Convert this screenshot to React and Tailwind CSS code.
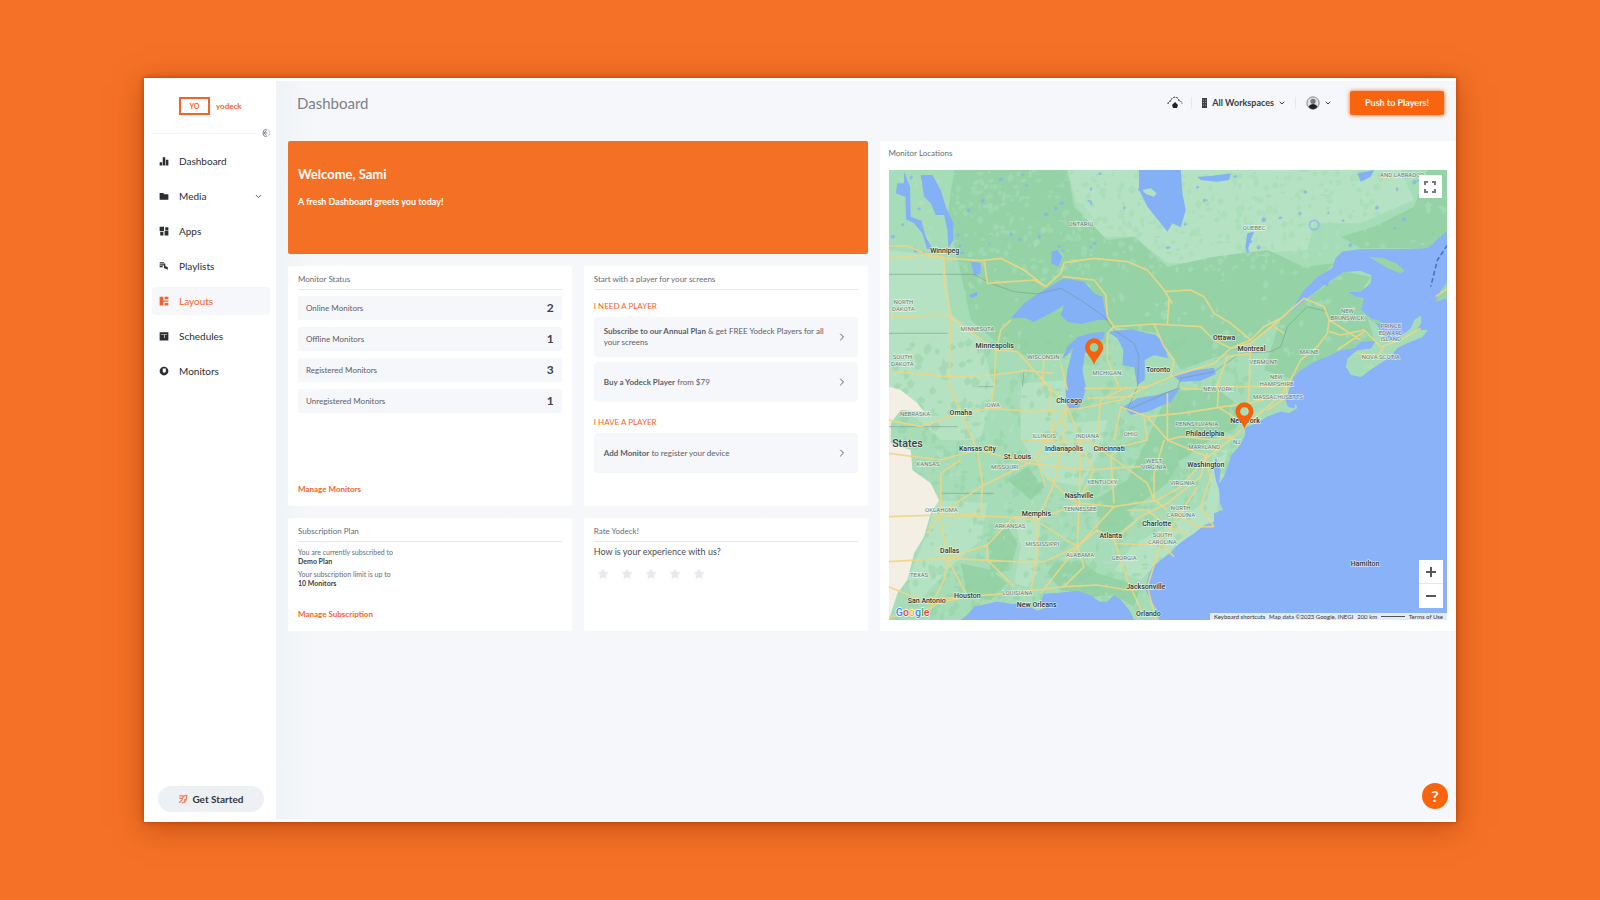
import { useState } from 'react'
import { ChevronDown, ChevronRight, Star } from 'lucide-react'

const NAV = [
  { label: 'Dashboard', icon: 'bars' },
  { label: 'Media', icon: 'folder', more: true },
  { label: 'Apps', icon: 'apps' },
  { label: 'Playlists', icon: 'playlist' },
  { label: 'Layouts', icon: 'layout', active: true },
  { label: 'Schedules', icon: 'calendar' },
  { label: 'Monitors', icon: 'monitor' },
]

const STATUS = [
  ['Online Monitors', 2],
  ['Offline Monitors', 1],
  ['Registered Monitors', 3],
  ['Unregistered Monitors', 1],
]

const ICONS = {
  bars: <path d="M1 10h4v5H1zM6 2h4v13H6zM11 6h4v9h-4z" />,
  folder: <path d="M1 3h6l1 2h7v9H1z" />,
  apps: <path d="M1 1h7v7H1zM10 2h5v5h-5zM2 9h5v6H2zM9 8h6v7H9z" />,
  playlist: <path d="M1 2h7v2H1zM1 5h7v2H1zM1 8h5v2H1zM8 4v7l6 3v-4l-4-2V4z" />,
  layout: <path d="M1 1h6v14H1zM9 1h6v4H9zM9 11h6v4H9zM7 7h8v2H7z" />,
  calendar: <path fillRule="evenodd" d="M1 2h14v13H1zM3 5h10v1H3zM8 6h1v5H8z" />,
  monitor: <path fillRule="evenodd" d="M8 1a7 7 0 1 0 0 14A7 7 0 0 0 8 1zM6 4h5v5l-3 2-2-2z" />,
}

function NavIcon({ name }) {
  return (
    <svg viewBox="0 0 16 16" className="h-[10px] w-[10px] shrink-0" fill="currentColor" aria-hidden="true">
      {ICONS[name]}
    </svg>
  )
}

function Sidebar() {
  return (
    <aside className="flex w-[132px] shrink-0 flex-col bg-white pr-[6px] pl-2">
      <a href="#home" className="mt-4 ml-[27px] flex h-[18px] items-center gap-[6px] text-[#f4622a]">
        <span className="flex h-[18px] w-[31px] items-center justify-center border-2 border-[#f4622a] text-[7px] font-bold">
          YO
        </span>
        <span className="text-[8px] font-bold">yodeck</span>
      </a>
      <div className="mt-2 flex h-5 items-center">
        <span className="h-px flex-1 bg-gray-100" />
        <button aria-label="Collapse menu" className="ml-1 text-gray-500">
          <svg viewBox="0 0 12 12" className="h-[10px] w-[10px]" fill="none" stroke="currentColor">
            <path d="M8 1.5a4.5 4.5 0 1 0 0 9M8 3 4.500 6 8 9M4.500 6H9" />
            <path d="M9 2a4.500 4.500 0 0 1 0 8" strokeDasharray="1 1" />
          </svg>
        </button>
      </div>
      <nav className="mt-1 flex flex-col gap-[7px]">
        {NAV.map((item) => (
          <a
            key={item.label}
            href={`#${item.label.toLowerCase()}`}
            className={`flex h-7 items-center gap-[10px] rounded-sm px-[7px] text-[10px] ${
              item.active ? 'bg-[#f6f7fa] text-[#f4622a]' : 'text-[#2b2e33]'
            }`}
          >
            <NavIcon name={item.icon} />
            <span className="flex-1">{item.label}</span>
            {item.more && <ChevronDown size={9} />}
          </a>
        ))}
      </nav>
      <button className="mt-auto mb-[7px] flex h-[26px] w-[106px] items-center justify-center gap-1 self-center rounded-full bg-[#edf1f4] text-[10px] font-bold text-[#33373d]">
        <svg viewBox="0 0 16 16" className="h-[10px] w-[10px]" fill="none" stroke="#f47b55" strokeWidth="2" aria-hidden="true">
          <path d="M2 3h7M2 7h5M2 14l4-4M6 14c5 0 8-4 8-12-4 0-7 3-8 8M11 8v6" />
        </svg>
        Get Started
      </button>
    </aside>
  )
}

function TopBar() {
  return (
    <header className="flex h-[44px] items-center pr-3 pl-[21px] text-[10px] text-[#3a3e44]">
      <h1 className="flex-1 text-[15px] text-[#7d8188]">Dashboard</h1>
      <button aria-label="Upload" className="px-2 text-[#222]">
        <svg viewBox="0 0 16 16" className="h-4 w-4" fill="none" stroke="currentColor" strokeWidth="1">
          <path d="M1 9c0-2 1-3 3-3 0-5 8-5 8 0 2 0 3 1 3 3" strokeDasharray="2 1" />
          <path d="M8 7l3 3-1 3H6l-1-3z" fill="currentColor" stroke="none" />
        </svg>
      </button>
      <span className="h-3 w-px bg-gray-200" />
      <button className="flex items-center gap-1 px-[9px] font-bold">
        <svg viewBox="0 0 8 12" className="h-[10px] w-[7px]" fill="currentColor" aria-hidden="true">
          <path fillRule="evenodd" d="M1 0h6v12H1zM2 2h1v1H2zM5 2h1v1H5zM2 5h1v1H2zM5 5h1v1H5zM2 8h1v1H2zM5 8h1v1H5z" />
        </svg>
        <span className="text-[9px]">All Workspaces</span>
        <ChevronDown size={8} strokeWidth={3} />
      </button>
      <span className="h-3 w-px bg-gray-200" />
      <button aria-label="Account" className="flex items-center gap-1 px-[10px]">
        <svg viewBox="0 0 16 16" className="h-[14px] w-[14px]" aria-hidden="true">
          <circle cx="8" cy="8" r="7" fill="#dfe2e6" stroke="#777" />
          <circle cx="8" cy="6" r="3" fill="#777" />
          <path d="M3 12c2-4 8-4 10 0-2 4-8 4-10 0z" fill="#222" />
        </svg>
        <ChevronDown size={8} strokeWidth={3} />
      </button>
      <button className="ml-2 h-6 w-[94px] rounded-xs bg-[#fb640f] text-[9px] font-bold text-white shadow-[0_0_4px_#fb640f]">
        Push to Players!
      </button>
    </header>
  )
}

function Card({ title, className = '', children }) {
  return (
    <section className={`flex flex-col rounded-xs bg-white px-[10px] pt-[5px] pb-[9px] ${className}`}>
      <h2 className="border-b border-[#e4e8eb] pb-[2px] text-[8px] leading-4 text-[#666b72]">{title}</h2>
      {children}
    </section>
  )
}

function PlayerLink({ children }) {
  return (
    <a href="#player" className="flex h-10 items-center gap-1 rounded-sm bg-[#f6f7fa] px-[10px] text-[8px] leading-[11px] text-[#5b6068]">
      <span className="flex-1">{children}</span>
      <ChevronRight size={12} className="shrink-0" />
    </a>
  )
}

function Rating() {
  const [rating, setRating] = useState(0)
  return (
    <div className="mt-2 ml-[3px] flex gap-3">
      {[1, 2, 3, 4, 5].map((n) => (
        <button key={n} aria-label={`${n} stars`} onClick={() => setRating(n)}>
          <Star size={12} strokeWidth={1} className={n <= rating ? 'fill-[#f4622a] text-[#f4622a]' : 'fill-[#e6eaee] text-[#e6eaee]'} />
        </button>
      ))}
    </div>
  )
}

const LAND =
  'M24 90H1701V270L1640 325 1560 328 1440 328 1385 335 1365 355 1355 385 1310 410 1270 450 1235 505 1200 535 1225 520 1280 475 1330 435 1390 395 1440 392 1472 405 1470 430 1440 455 1400 455 1425 470 1450 475 1440 510 1465 530 1490 555 1510 590 1545 600 1590 565 1600 540 1622 525 1622 550 1608 570 1642 570 1625 592 1580 610 1550 625 1530 650 1500 670 1470 690 1440 712 1410 705 1395 680 1400 655 1430 630 1470 625 1485 602 1440 605 1420 625 1380 630 1350 645 1300 665 1260 690 1240 710 1225 750 1215 780 1222 800 1240 805 1245 790 1250 805 1225 820 1200 815 1160 830 1130 850 1095 862 1092 890 1075 920 1052 945 1045 970 1030 1010 1015 1030 1020 990 1005 950 998 980 1005 1020 1015 1050 1018 1090 1028 1110 1000 1120 1000 1145 970 1155 940 1180 910 1200 890 1215 870 1240 840 1260 815 1280 800 1320 795 1350 810 1380 830 1410 835 1440H760L745 1410 720 1380 700 1365 680 1385 655 1385 630 1365 590 1352 540 1358 490 1362 480 1385 505 1400 470 1412 430 1392 390 1392 350 1385 320 1392 280 1400 260 1425 240 1440H24z'

const FOREST = [
  'M220 90H560L580 200 680 300 760 290 860 380 1000 350 1160 330 1270 380 1360 370 1200 535 1090 620 900 690 830 580 690 560 660 640 560 640 440 650 340 600 270 540 240 400 200 230z',
  'M1200 535 1390 395 1470 410 1440 460 1480 600 1300 670 1240 720 1150 690z',
  'M1640 90H1701V270L1640 325H1440L1380 290 1480 260 1600 200z',
  'M860 760 1000 740 1080 800 1070 860 990 900 900 960 860 1030 780 1090 700 1140 650 1130 640 1080 740 1020 790 920z',
  'M380 1020 440 980 490 1040 450 1080z',
  'M320 1200 380 1160 410 1210 390 1290 330 1300z',
  'M240 1270 330 1290 380 1330 330 1380 260 1370z',
  'M520 1270 600 1260 650 1300 780 1340 760 1400 700 1365 640 1370 540 1350 500 1300z',
  'M660 1130 740 1100 760 1140 700 1190 650 1170z',
]

const LIGHT = [
  'M560 90H1560L1600 180 1440 250 1300 250 1280 330 1120 340 960 370 860 370 760 290 660 290 590 200z',
  'M24 330 190 350 210 520 300 600 340 740 300 900 180 900 24 760z',
  'M420 730 560 720 560 850 680 840 660 930 600 1040 500 1020 420 900z',
  'M400 1130 480 1130 470 1300 440 1340 400 1330 420 1220z',
  'M170 1080 320 1090 300 1200 210 1280 100 1400 80 1320 130 1200z',
  'M1000 930 1040 930 1015 1080 1000 1180 880 1220 780 1320 700 1290 760 1210 880 1150 980 1080z',
]

const LAKES = [
  'M120 105H155L180 150 195 200 218 250 218 300 203 325 200 270 190 225 165 225 150 190 130 170z',
  'M70 95 88 140 90 230 122 242 135 290 156 328 138 326 125 280 100 250 76 238 74 170 45 160 50 130 70 130z',
  'M775 90H900L905 160 915 210 900 262 875 250 860 275 840 250 800 200 775 150z',
  'M390 535 430 490 490 450 550 415 610 425 640 460 665 470 675 520 688 540 650 540 600 552 560 545 540 525 550 495 510 520 460 545 430 533z',
  'M545 655 560 620 590 592 630 580 672 575 668 598 630 608 613 640 605 690 615 740 608 775 592 808 565 810 555 790 555 740 560 690 578 620 560 645z',
  'M680 575 750 568 825 585 850 610 862 655 820 645 792 660 792 720 770 735 760 682 725 675 728 630 710 595z',
  'M728 800 770 775 830 765 900 742 870 785 800 815 750 824z',
  'M875 705 930 692 1000 683 1005 702 960 722 900 725z',
  'M512 335 530 330 545 350 532 380 512 370z',
  'M270 365 300 370 300 400 280 408z',
  'M265 465 290 455 288 468 270 474z',
  'M950 110 990 108 1050 100 1045 120 1010 125 960 120z',
  'M1100 280 1120 275 1110 300 1098 340 1094 320z',
  'M1430 100 1480 90 1470 110 1440 125z',
  'M1320 425 1345 420 1340 440z',
]

const ROADS = [
  'M24 318 80 318 130 340 200 355 300 362 360 355 430 390 495 440 540 400 550 368 640 355 740 365 800 390 850 450 875 490',
  'M24 355 130 345 190 355 190 430 210 520 205 740 240 820 290 930 305 1030 300 1120 200 1130',
  'M310 362 320 430 460 420 495 440',
  'M545 410 640 420 675 465 680 530 700 560 820 552 960 560 1000 600 1050 625 1110 600',
  'M700 560 680 580 680 660 715 740',
  'M24 530 200 525 290 590 345 630 410 635 450 680 510 745 560 800',
  'M390 540 360 570 345 640 340 740 330 800',
  'M24 693 200 710 340 705 450 690',
  'M850 455 930 450 970 470 1000 520 1050 550 1110 600 1150 560 1200 535 1270 475 1330 500 1345 540 1440 600',
  'M820 552 850 620 880 660 870 710 800 740 720 780 600 805 460 815 330 805 240 820 120 860 24 840',
  'M865 470 860 552',
  'M870 710 1000 670 1050 625 1110 610 1105 740 1100 840',
  'M1110 610 1190 545 1270 475M1105 640 1040 650 1015 720 1010 800 1090 850',
  'M1345 540 1340 580 1310 620 1260 660 1240 700 1205 760 1150 810 1095 855 1060 890 970 960 900 1040 830 1080 700 1100 590 1220 480 1360',
  'M1345 575 1380 585 1450 570 1500 620 1560 600 1620 565M1450 575 1370 630M1510 620 1490 650 1430 640',
  'M560 800 500 900 460 960 300 1040 180 1120 140 1180',
  'M560 800 600 900 620 900 690 950 800 1030 820 1080',
  'M560 800 540 930 520 1030 470 1140 465 1260 450 1360',
  'M24 940 180 960 290 930 450 970 620 990 780 980',
  'M24 1130 180 1125 360 1130 460 1140 600 1090 700 1100',
  'M24 1265 200 1255 320 1215 400 1130 470 1140',
  'M200 1255 180 1130 180 1000 240 960',
  'M200 1255 260 1370 170 1390 130 1420 24 1430M200 1255 190 1320 145 1410',
  'M320 1215 320 1260 400 1340',
  'M205 1255 400 1265 490 1265 590 1220',
  'M24 1340 120 1380 260 1370 380 1360 550 1340 650 1335 740 1350 820 1345',
  'M590 1220 650 1170 700 1200 780 1130 860 1090 960 1010 980 940',
  'M590 1220 610 1280 550 1340M480 1150 590 1220 595 1090 600 900',
  'M700 1200 740 1320 790 1430M700 1210 820 1215 860 1180 950 1040',
  'M880 1250 840 1210 800 1340 825 1440',
  'M1000 1160 960 1100 990 1010 970 950',
  'M510 745 515 900 460 900 420 900M650 900 660 780 740 740',
  'M700 900 720 800 800 830 860 900 900 890 1000 900 1060 890',
  'M800 830 900 820 1030 800 1105 790 1180 770',
  'M850 900 820 1000 820 1080 860 1110M790 830 800 900 720 920 690 950',
  'M690 950 700 1090M540 930 470 960 495 1040M500 1010 560 1070 595 1090',
  'M590 900 640 990 600 1070M600 905 480 905M860 760 860 900 980 950',
  'M740 1110 800 1110 860 1160 920 1180M870 1090 900 1130 950 1160 1000 1160',
  'M1180 560 1210 580M1020 740 1210 740M1160 810 1220 770 1215 730',
  'M490 650 485 740M540 670 560 750M1665 470 1701 445',
  'M610 745 740 745 800 740M420 690 520 700M620 775 760 770M900 745 1000 750 1015 720',
]

const BORDERS = [
  'M24 403H280L330 430 400 455 470 462 540 445 600 480 670 530 700 570 760 610 775 650 770 740 740 810 890 745 900 715 1000 695 1080 640 1170 635 1200 620 1220 560 1280 500 1340 515',
  'M24 580H200M24 860H230M290 740H340M180 1060H340M430 690 425 740',
]

const STATES = [
  ['ONTARIO', 600, 258],
  ['QUEBEC', 1120, 269],
  ['NORTH', 68, 492],
  ['DAKOTA', 68, 512],
  ['MINNESOTA', 290, 574],
  ['SOUTH', 65, 658],
  ['DAKOTA', 65, 678],
  ['WISCONSIN', 488, 656],
  ['MICHIGAN', 678, 706],
  ['VERMONT', 1148, 671],
  ['NEW', 1187, 717],
  ['HAMPSHIRE', 1187, 737],
  ['MAINE', 1285, 641],
  ['NEW', 1400, 520],
  ['BRUNSWICK', 1400, 541],
  ['PRINCE', 1530, 565],
  ['EDWARD', 1530, 584],
  ['ISLAND', 1530, 603],
  ['NOVA SCOTIA', 1500, 656],
  ['AND LABRADOR', 1564, 111],
  ['NEW YORK', 1012, 754],
  ['MASSACHUSETTS', 1192, 776],
  ['PENNSYLVANIA', 948, 858],
  ['NJ', 1068, 913],
  ['MARYLAND', 970, 926],
  ['VIRGINIA', 905, 1034],
  ['NORTH', 900, 1110],
  ['CAROLINA', 900, 1130],
  ['IOWA', 335, 800],
  ['NEBRASKA', 103, 827],
  ['KANSAS', 142, 979],
  ['MISSOURI', 372, 988],
  ['ILLINOIS', 490, 894],
  ['INDIANA', 620, 893],
  ['OHIO', 750, 888],
  ['WEST', 820, 968],
  ['VIRGINIA', 820, 988],
  ['KENTUCKY', 665, 1033],
  ['TENNESSEE', 598, 1114],
  ['OKLAHOMA', 182, 1116],
  ['ARKANSAS', 388, 1163],
  ['MISSISSIPPI', 485, 1219],
  ['SOUTH', 845, 1190],
  ['CAROLINA', 845, 1212],
  ['ALABAMA', 598, 1251],
  ['GEORGIA', 730, 1261],
  ['TEXAS', 115, 1311],
  ['LOUISIANA', 410, 1364],
]

const CITIES = [
  ['Winnipeg', 192, 340],
  ['Minneapolis', 342, 623],
  ['Toronto', 832, 695],
  ['Ottawa', 1030, 599],
  ['Montreal', 1112, 632],
  ['New York', 1093, 850],
  ['Philadelphia', 973, 887],
  ['Washington', 975, 980],
  ['Chicago', 565, 789],
  ['Omaha', 240, 825],
  ['Kansas City', 290, 932],
  ['St. Louis', 410, 956],
  ['Indianapolis', 550, 934],
  ['Cincinnati', 685, 932],
  ['Nashville', 595, 1075],
  ['Memphis', 467, 1129],
  ['Charlotte', 828, 1159],
  ['Atlanta', 690, 1194],
  ['Dallas', 207, 1239],
  ['Jacksonville', 795, 1347],
  ['Houston', 260, 1374],
  ['San Antonio', 138, 1389],
  ['New Orleans', 468, 1401],
  ['Orlando', 803, 1429],
  ['Hamilton', 1453, 1277],
]

// small seeded generator so the terrain speckle is the same on every render
function speckle(count, seed, x0, y0, x1, y1, size) {
  let s = seed
  const next = () => {
    s = (s * 16807) % 2147483647
    return s / 2147483647
  }
  let d = ''
  for (let i = 0; i < count; i++) {
    const x = Math.round(x0 + next() * (x1 - x0))
    const y = Math.round(y0 + next() * (y1 - y0))
    const w = Math.round(4 + next() * size)
    const h = Math.round(3 + next() * size)
    d += `M${x} ${y}l${w} ${-h} ${w} ${h} ${-Math.round(w / 2)} ${h} ${-w} ${Math.round(h / 3)}z`
  }
  return d
}

const SPECKLE_LIGHT = speckle(600, 71, 24, 90, 1701, 1440, 8)
const SPECKLE_DARK = speckle(600, 913, 24, 600, 1100, 1440, 12)
const SPECKLE_NORTH = speckle(420, 377, 200, 90, 1500, 400, 8)
const PONDS = speckle(60, 5003, 24, 90, 1640, 340, 4)

function Pin({ x, y }) {
  return (
    <g transform={`translate(${x} ${y})`}>
      <path fillRule="evenodd" fill="#f8610c" d="M0 40C-8 18-27 6-27-12a27 27 0 0 1 54 0C27 6 8 18 0 40zM0-25a13 13 0 1 0 0 26 13 13 0 0 0 0-26z" />
    </g>
  )
}

function MonitorMap() {
  return (
    <svg viewBox="24 90 1677 1350" preserveAspectRatio="xMidYMid slice" className="h-full w-full" role="img" aria-label="Monitor locations">
      <defs>
        <clipPath id="land">
          <path d={LAND} />
        </clipPath>
      </defs>
      <rect x="24" y="90" width="1677" height="1350" fill="#8ab2f8" />
      <g clipPath="url(#land)">
        <path d={LAND} fill="#a6dcb7" />
        <path d={LIGHT.join('')} fill="#b4e2c2" />
        <path d={FOREST.join('')} fill="#95d3a6" />
        <path d={SPECKLE_LIGHT} fill="#bbe5c8" opacity="0.35" />
        <path d={SPECKLE_DARK} fill="#8fd0a1" opacity="0.4" />
        <path d={SPECKLE_NORTH} fill="#a5dcb6" opacity="0.6" />
        <path d="M24 740 60 750 110 790 130 815 60 810 30 850V910L90 930 95 990 150 1030 175 1080 150 1120 130 1190 100 1240 80 1320 50 1360 24 1440z" fill="#f3efe4" />
        <path d={PONDS} fill="#86b4f0" opacity="0.8" />
      </g>
      <path d="M1465 350 1510 355 1550 372 1572 392 1560 400 1520 385zM1665 485 1680 450 1701 425V475zM1460 535 1490 540 1510 552 1480 548z" fill="#97d5a8" />
      <path d={LAKES.join('')} fill="#84b0f5" />
      <path d="M785 150 810 145 828 160 820 170 795 162z" fill="#b4e0bd" />
      <circle cx="1300" cy="255" r="14" fill="none" stroke="#84b0f5" strokeWidth="5" opacity="0.7" />
      <path d={BORDERS.join('')} fill="none" stroke="#6f9384" strokeWidth="3" opacity="0.5" />
      <path d={ROADS.join('')} fill="none" stroke="#edd584" strokeWidth="5" strokeLinejoin="round" opacity="0.9" />
      <path d="M1700 315 1670 360 1650 440" fill="none" stroke="#4d74b5" strokeWidth="5" strokeDasharray="14 8" />
      <g fontFamily="Roboto, sans-serif" textAnchor="middle" stroke="#ffffff" strokeOpacity="0.6" strokeWidth="4" paintOrder="stroke">
        <g fontSize="18" fill="#66776f">
          {STATES.map(([name, x, y]) => (
            <text key={`${name}${x}`} x={x} y={y}>{name}</text>
          ))}
        </g>
        <g fontSize="21" fontWeight="500" fill="#2c3431">
          {CITIES.map(([name, x, y]) => (
            <text key={name} x={x} y={y}>{name}</text>
          ))}
        </g>
        <text x="80" y="920" fontSize="32" fontWeight="500" fill="#3c4043">States</text>
      </g>
      <text x="45" y="1428" fontFamily="Roboto, sans-serif" fontSize="32" fontWeight="500" stroke="#fff" strokeWidth="4" paintOrder="stroke">
        <tspan fill="#4285f4">G</tspan>
        <tspan fill="#ea4335">o</tspan>
        <tspan fill="#fbbc05">o</tspan>
        <tspan fill="#4285f4">g</tspan>
        <tspan fill="#34a853">l</tspan>
        <tspan fill="#ea4335">e</tspan>
      </text>
      <Pin x={640} y={634} />
      <Pin x={1091} y={826} />
    </svg>
  )
}

export default function App() {
  return (
    <div className="flex min-h-screen bg-[#f47127] px-[9%] py-[78px] font-['Lato',sans-serif]">
      <div className="relative flex min-w-0 flex-1 border-y-3 border-white bg-[#f5f7fb] shadow-[0_0_5px_#b83c00,0_6px_28px_#b8470ccc]">
        <Sidebar />
        <main className="min-w-0 flex-1 bg-linear-to-r from-[#f0f3f6] to-[#f5f7fb] to-3%">
          <TopBar />
          <div className="mt-4 grid grid-cols-[284fr_284fr_577fr] grid-rows-[113px_240px_113px] gap-3 pl-3">
            <section className="col-span-2 rounded-xs bg-[#f47024] px-[10px] pt-[25px] font-bold text-white">
              <h2 className="text-[13px] leading-4">Welcome, Sami</h2>
              <p className="mt-3 text-[9px] leading-4">A fresh Dashboard greets you today!</p>
            </section>

            <section className="col-start-3 row-span-3 row-start-1 flex flex-col bg-white px-[9px] pt-1 pb-[11px]">
              <h2 className="h-[25px] text-[8px] leading-4 text-[#666b72]">Monitor Locations</h2>
              <div className="relative min-h-0 flex-1">
                <MonitorMap />
                <button aria-label="Toggle fullscreen" className="absolute top-[5px] right-[5px] flex h-[23px] w-[23px] items-center justify-center bg-white">
                  <svg viewBox="0 0 12 12" className="h-3 w-3" fill="none" stroke="#777" strokeWidth="2" aria-hidden="true">
                    <path d="M1 4V1h3M8 1h3v3M11 8v3H8M4 11H1V8" />
                  </svg>
                </button>
                <div className="absolute right-1 bottom-3 flex w-6 flex-col divide-y divide-gray-200 bg-white text-[#555]">
                  <button aria-label="Zoom in" className="flex h-6 items-center justify-center">
                    <svg viewBox="0 0 10 10" className="h-[10px] w-[10px]" stroke="currentColor" strokeWidth="2" aria-hidden="true">
                      <path d="M5 0v10M0 5h10" />
                    </svg>
                  </button>
                  <button aria-label="Zoom out" className="flex h-6 items-center justify-center">
                    <svg viewBox="0 0 10 10" className="h-[10px] w-[10px]" stroke="currentColor" strokeWidth="2" aria-hidden="true">
                      <path d="M0 5h10" />
                    </svg>
                  </button>
                </div>
                <div className="absolute right-0 bottom-0 flex h-[7px] w-[237px] items-center justify-between bg-white/75 px-1 text-[6px] leading-[7px] text-[#333]">
                  <button>Keyboard shortcuts</button>
                  <span>Map data ©2023 Google, INEGI</span>
                  <span>200 km</span>
                  <span className="h-px w-6 bg-[#555]" />
                  <a href="#terms">Terms of Use</a>
                </div>
              </div>
            </section>

            <Card title="Monitor Status">
              <ul className="mt-[6px] flex flex-col gap-[7px]">
                {STATUS.map(([label, count]) => (
                  <li key={label} className="flex h-6 items-center justify-between rounded-xs bg-[#f6f7fa] px-2 text-[8px] text-[#5b6068]">
                    <span>{label}</span>
                    <span className="text-[12px] font-bold text-[#3f434a]">{count}</span>
                  </li>
                ))}
              </ul>
              <a href="#monitors" className="mt-auto text-[8px] leading-4 font-bold text-[#f4622a]">Manage Monitors</a>
            </Card>

            <Card title="Start with a player for your screens">
              <h3 className="mt-2 mb-[3px] text-[8px] leading-4 text-[#f4622a]">I NEED A PLAYER</h3>
              <div className="flex flex-col gap-[5px]">
                <PlayerLink>
                  <b>Subscribe to our Annual Plan</b> &amp; get FREE Yodeck Players for all your screens
                </PlayerLink>
                <PlayerLink>
                  <b>Buy a Yodeck Player</b> from $79
                </PlayerLink>
              </div>
              <h3 className="mt-3 mb-[3px] text-[8px] leading-4 text-[#f4622a]">I HAVE A PLAYER</h3>
              <PlayerLink>
                <b>Add Monitor</b> to register your device
              </PlayerLink>
            </Card>

            <Card title="Subscription Plan">
              <div className="mt-[6px] flex flex-col gap-1 text-[7px] leading-[9px] text-[#666b72]">
                <p>
                  You are currently subscribed to
                  <b className="block text-[#3a3e44]">Demo Plan</b>
                </p>
                <p>
                  Your subscription limit is up to
                  <b className="block text-[#3a3e44]">10 Monitors</b>
                </p>
              </div>
              <a href="#subscription" className="mt-auto text-[8px] leading-4 font-bold text-[#f4622a]">Manage Subscription</a>
            </Card>

            <Card title="Rate Yodeck!">
              <p className="mt-[2px] text-[9px] leading-4 text-[#4a4e55]">How is your experience with us?</p>
              <Rating />
            </Card>
          </div>
        </main>
        <button aria-label="Help" className="absolute right-2 bottom-[10px] flex h-[26px] w-[26px] items-center justify-center rounded-full bg-[#fb640f] text-[16px] font-bold text-white">
          ?
        </button>
      </div>
    </div>
  )
}
